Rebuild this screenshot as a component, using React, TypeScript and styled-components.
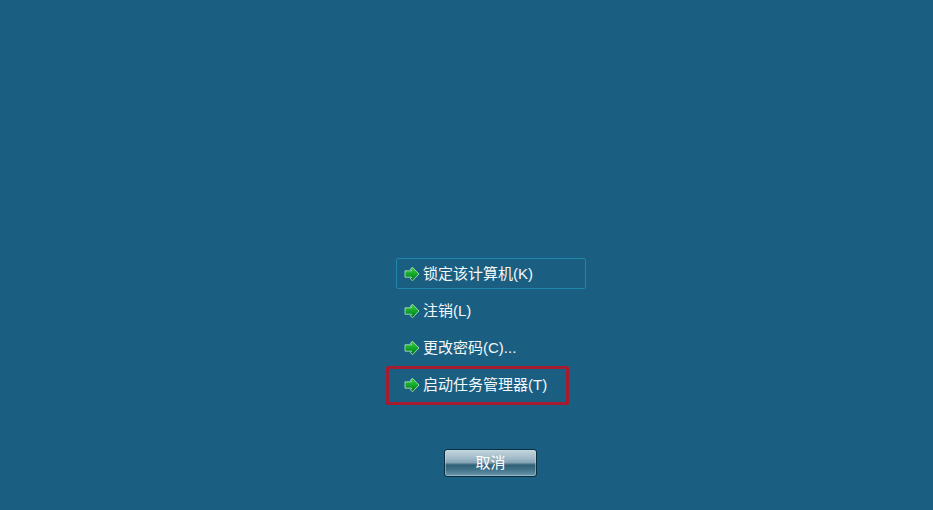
import React from 'react';
import styled, { createGlobalStyle } from 'styled-components';

const GlobalStyle = createGlobalStyle`
  html, body { margin: 0; padding: 0; background: #1a5f82; }
`;

const Screen = styled.div`
  width: 933px;
  height: 510px;
  box-sizing: border-box;
  overflow: hidden;
  background: #1a5f82;
  padding: 258px 0 0 396px;
  font-family: "Liberation Sans", "Noto Sans CJK SC", sans-serif;
  color: #fff;
`;

const Menu = styled.div`
  width: 190px;
  display: flex;
  flex-direction: column;
`;

const Row = styled.div<{ $active?: boolean }>`
  position: relative;
  box-sizing: border-box;
  height: ${p => (p.$active ? 31 : 37)}px;
  display: flex;
  align-items: center;
  gap: 3px;
  padding-left: 7px;
  font-size: 15px;
  border: 1px solid ${p => (p.$active ? '#1f86ab' : 'transparent')};
  border-radius: 2px;
  margin-bottom: ${p => (p.$active ? 3 : 0)}px;
`;

const Label = styled.span`
  margin-bottom: 3px;
  color: #f4f8fa;
`;

const Highlight = styled.div`
  position: absolute;
  left: -11px;
  top: -1px;
  width: 183px;
  height: 39px;
  box-sizing: border-box;
  border: 3px solid #a51c30;
  border-radius: 2px;
`;

const ButtonWrap = styled.div`
  width: 190px;
  display: flex;
  justify-content: flex-start;
  padding: 46px 0 0 48px;
`;

const CancelButton = styled.button`
  width: 93px;
  height: 28px;
  box-sizing: border-box;
  padding: 0 0 3px;
  border: 1px solid #0c2c40;
  border-radius: 3px;
  background: linear-gradient(
    to bottom,
    #c4d6de 0%,
    #a3bcc9 30%,
    #84a4b3 48%,
    #2f5f75 58%,
    #3f7288 75%,
    #6d98aa 100%
  );
  box-shadow: inset 0 0 0 1px rgba(200, 225, 235, 0.45);
  color: #fff;
  font-family: inherit;
  font-size: 15px;
`;

const arrowPath = 'M8.4 1.2 L15 8 L8.4 14.8 L6.4 12.8 L7.6 11.2 L1 11.2 L1 4.8 L7.6 4.8 L6.4 3.2 Z';

const Arrow = () => (
  <svg width="16" height="16" viewBox="0 0 16 16" style={{ flex: 'none' }}>
    <defs>
      <linearGradient id="arrowFill" x1="0" y1="0" x2="0" y2="1">
        <stop offset="0" stopColor="#45d23f" />
        <stop offset="0.5" stopColor="#12a82a" />
        <stop offset="1" stopColor="#05721e" />
      </linearGradient>
    </defs>
    <path d={arrowPath} fill="url(#arrowFill)" stroke="#b9e6c6" strokeWidth="0.8" strokeLinejoin="round" />
  </svg>
);

export default function App() {
  return (
    <Screen>
      <GlobalStyle />
      <Menu>
        <Row $active>
          <Arrow />
          <Label>锁定该计算机(K)</Label>
        </Row>
        <Row>
          <Arrow />
          <Label>注销(L)</Label>
        </Row>
        <Row>
          <Arrow />
          <Label>更改密码(C)...</Label>
        </Row>
        <Row>
          <Highlight />
          <Arrow />
          <Label>启动任务管理器(T)</Label>
        </Row>
      </Menu>
      <ButtonWrap>
        <CancelButton>取消</CancelButton>
      </ButtonWrap>
    </Screen>
  );
}
